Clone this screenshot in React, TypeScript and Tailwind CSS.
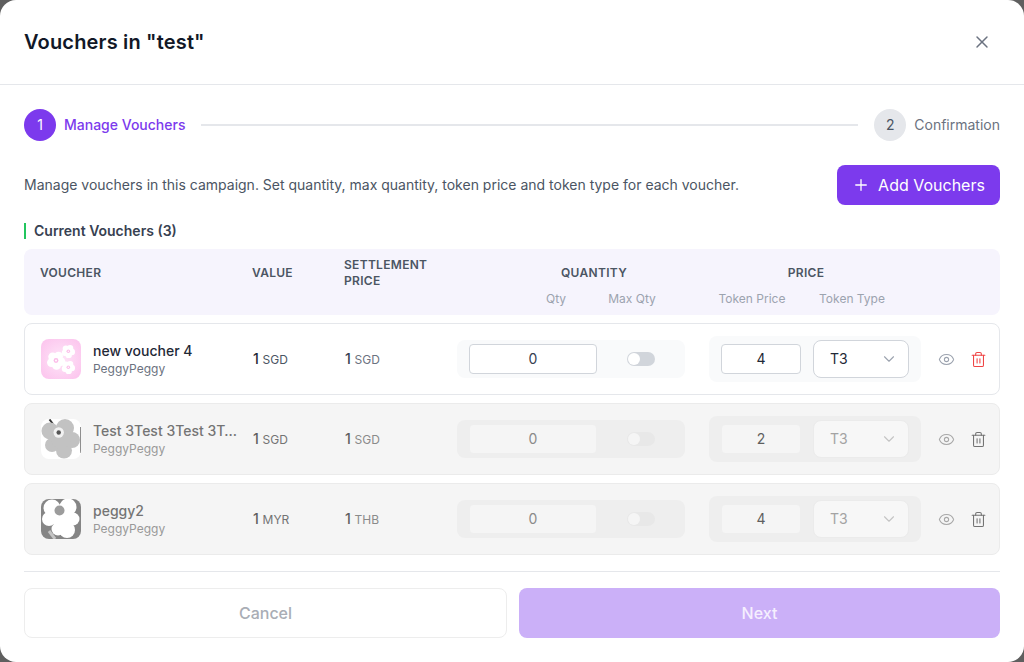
import React from "react";
import { X, Plus, Eye, Trash2, ChevronDown } from "lucide-react";

function PinkFlowers() {
  const flower = (cx: number, cy: number, r: number, p: number) => (
    <g>
      {[0, 72, 144, 216, 288].map((a) => (
        <circle
          key={a}
          cx={cx + r * Math.cos(((a - 60) * Math.PI) / 180)}
          cy={cy + r * Math.sin(((a - 60) * Math.PI) / 180)}
          r={p}
          fill="#fff"
        />
      ))}
      <circle cx={cx} cy={cy} r={p} fill="#fff" />
      <circle cx={cx} cy={cy} r={p * 0.55} fill="#fbbde9" />
      <circle cx={cx} cy={cy} r={p * 0.22} fill="#fff" />
    </g>
  );
  return (
    <svg viewBox="0 0 40 40" className="w-10 h-10 shrink-0 rounded-lg">
      <defs>
        <radialGradient id="pinkbg" cx="50%" cy="50%" r="62%">
          <stop offset="0%" stopColor="#fee6f8" />
          <stop offset="100%" stopColor="#fcc6ee" />
        </radialGradient>
      </defs>
      <rect width="40" height="40" fill="url(#pinkbg)" />
      {flower(15, 21.5, 5, 4.4)}
      {flower(27.3, 12.3, 3.6, 3.2)}
      {flower(27.3, 28.3, 3.6, 3.2)}
    </svg>
  );
}

function GrayFlower() {
  return (
    <svg viewBox="0 0 40 40" className="w-10 h-10 shrink-0 rounded-lg">
      <rect width="40" height="40" fill="#ffffff" />
      <path d="M39.5 8v26" stroke="#8f8f8f" strokeWidth="1" />
      <path d="M8.5 0.5l3.5 4.5" stroke="#333333" strokeWidth="2" />
      <g fill="#c2c2c2">
        <circle cx="9" cy="12" r="8.5" />
        <circle cx="24" cy="9" r="9" />
        <circle cx="31" cy="21" r="8" />
        <circle cx="23" cy="31.5" r="8" />
        <circle cx="11" cy="26" r="7" />
        <circle cx="20" cy="20" r="10" />
      </g>
      <circle cx="17.7" cy="13.5" r="5.2" fill="#f2f2f2" />
      <circle cx="17.7" cy="13.5" r="2.2" fill="#555555" />
    </svg>
  );
}

function DarkFlower() {
  return (
    <svg viewBox="0 0 40 40" className="w-10 h-10 shrink-0 rounded-lg">
      <rect width="40" height="40" fill="#858585" />
      <path d="M8 32l6 8" stroke="#c4c4c4" strokeWidth="3" />
      <g fill="#ffffff">
        <circle cx="11" cy="9" r="8.5" />
        <circle cx="27" cy="8" r="8.5" />
        <circle cx="32" cy="20" r="6.5" />
        <circle cx="26" cy="31" r="8" />
        <circle cx="8" cy="20" r="7" />
        <circle cx="17" cy="30" r="6.5" />
        <circle cx="20" cy="18" r="10" />
      </g>
      <circle cx="18.5" cy="11.5" r="5" fill="#9c9c9c" />
    </svg>
  );
}

type Row = {
  img: React.ReactNode;
  name: string;
  value: string;
  settle: string;
  price: string;
  active?: boolean;
};

const rows: Row[] = [
  { img: <PinkFlowers />, name: "new voucher 4", value: "SGD", settle: "SGD", price: "4", active: true },
  { img: <GrayFlower />, name: "Test 3Test 3Test 3Test 3", value: "SGD", settle: "SGD", price: "2" },
  { img: <DarkFlower />, name: "peggy2", value: "MYR", settle: "THB", price: "4" },
];

function VoucherRow({ r }: { r: Row }) {
  const a = r.active;
  return (
    <div
      className={
        "flex items-center h-[72px] pl-4 rounded-lg border " +
        (a ? "bg-white border-[#e5e7eb]" : "bg-[#f5f5f5] border-[#ebebeb]")
      }
    >
      <div className="flex items-center gap-3 w-[212px] pr-3 min-w-0">
        {r.img}
        <div className="min-w-0 flex-1">
          <div className={"text-sm leading-5 truncate font-medium " + (a ? "text-[#1f2937]" : "text-[#747474]")}>
            {r.name}
          </div>
          <div className={"text-xs leading-4 truncate " + (a ? "text-[#6b7280]" : "text-[#999999]")}>PeggyPeggy</div>
        </div>
      </div>
      <div className={"w-[92px] text-sm font-medium " + (a ? "text-[#1f2937]" : "text-[#5f5f5f]")}>
        1 <span className={"text-xs font-normal " + (a ? "text-[#4b5563]" : "text-[#737373]")}>{r.value}</span>
      </div>
      <div className={"w-[112px] text-sm font-medium " + (a ? "text-[#374151]" : "text-[#5f5f5f]")}>
        1 <span className={"text-xs font-normal " + (a ? "text-[#6b7280]" : "text-[#8a8a8a]")}>{r.settle}</span>
      </div>
      <div
        className={
          "flex items-center w-[228px] h-[38px] px-3 rounded-lg " + (a ? "bg-[#f9fafb]" : "bg-[#eeeeee]")
        }
      >
        <div
          className={
            "w-32 h-[30px] flex items-center justify-center text-sm rounded border " +
            (a ? "bg-white border-[#d1d5db] text-[#374151]" : "bg-[#f5f5f5] border-[#eeeeee] text-[#8a8a8a]")
          }
        >
          0
        </div>
        <div
          className={
            "ml-[30px] w-7 h-3.5 rounded-full flex items-center pl-px " + (a ? "bg-[#d1d5db]" : "bg-[#e8e8e8]")
          }
        >
          <div className={"w-3 h-3 rounded-full " + (a ? "bg-white" : "bg-[#f5f5f5]")} />
        </div>
      </div>
      <div
        className={
          "ml-6 flex items-center gap-3 w-[212px] h-[46px] px-3 rounded-lg " + (a ? "bg-[#f9fafb]" : "bg-[#eeeeee]")
        }
      >
        <div
          className={
            "w-20 h-[30px] flex items-center justify-center text-sm rounded border " +
            (a ? "bg-white border-[#d1d5db] text-[#1f2937]" : "bg-[#f5f5f5] border-[#eeeeee] text-[#5f5f5f]")
          }
        >
          {r.price}
        </div>
        <div
          className={
            "w-24 h-[38px] flex items-center justify-between pl-4 pr-2.5 text-sm rounded-lg border " +
            (a ? "bg-white border-[#d1d5db] text-[#1f2937]" : "bg-[#f7f7f7] border-[#ebebeb] text-[#a3a3a3]")
          }
        >
          T3
          <ChevronDown size={18} strokeWidth={1.5} className={a ? "text-[#9ca3af]" : "text-[#c4c4c4]"} />
        </div>
      </div>
      <div className="ml-[17px] flex items-center gap-[15px]">
        <Eye size={17} strokeWidth={1.5} className={a ? "text-[#9ca3af]" : "text-[#a8a8a8]"} />
        <Trash2 size={17} strokeWidth={1.5} className={a ? "text-[#ef4444]" : "text-[#737373]"} />
      </div>
    </div>
  );
}

export default function App() {
  return (
    <div className="w-[1024px] h-[662px] bg-[#5f5f5f] overflow-hidden font-['Inter',sans-serif] [font-optical-sizing:none]">
      <div className="w-full h-full bg-white rounded-2xl flex flex-col">
        <div className="h-[85px] shrink-0 border-b border-[#e5e7eb] flex items-center justify-between px-6">
          <h1 className="text-xl font-semibold text-[#111827] tracking-[0.17px]">Vouchers in "test"</h1>
          <button className="w-9 h-9 flex items-center justify-center text-[#6b7280]">
            <X size={20} strokeWidth={1.75} />
          </button>
        </div>

        <div className="flex-1 px-6 pt-6 flex flex-col">
          <div className="flex items-center h-8">
            <div className="w-8 h-8 rounded-full bg-[#7c3aed] text-white text-sm flex items-center justify-center">1</div>
            <span className="ml-2 text-sm font-medium text-[#7c3aed]">Manage Vouchers</span>
            <div className="flex-1 h-0.5 mx-4 bg-[#e5e7eb]" />
            <div className="w-8 h-8 rounded-full bg-[#e5e7eb] text-[#4b5563] text-sm flex items-center justify-center">2</div>
            <span className="ml-2 text-sm text-[#6b7280]">Confirmation</span>
          </div>

          <div className="mt-6 flex items-center justify-between h-10">
            <p className="text-sm text-[#4b5563]">
              Manage vouchers in this campaign. Set quantity, max quantity, token price and token type for each voucher.
            </p>
            <button className="h-10 w-[163px] rounded-lg bg-[#7c3aed] text-white flex items-center justify-center gap-2 text-base font-normal">
              <Plus size={18} strokeWidth={1.75} />
              Add Vouchers
            </button>
          </div>

          <div className="mt-[18px] h-4 flex items-center border-l-2 border-[#22c55e] pl-2 text-sm font-semibold text-[#374151]">
            Current Vouchers (3)
          </div>

          <div className="mt-2.5 h-[66px] rounded-lg bg-[#f6f4fd] px-4 pt-2">
            <div className="flex items-center h-8 text-xs font-semibold text-[#4b5563] tracking-wide uppercase">
              <div className="w-[212px]">Voucher</div>
              <div className="w-[92px]">Value</div>
              <div className="w-[113px] leading-4">Settlement Price</div>
              <div className="w-[274px] text-center">Quantity</div>
              <div className="w-[150px] text-center">Price</div>
            </div>
            <div className="mt-0.5 flex pl-[478px] text-xs leading-4 text-[#9ca3af]">
              <div className="w-[76px] text-center">Qty</div>
              <div className="w-[76px] text-center">Max Qty</div>
              <div className="w-[100px] ml-8 text-center">Token Price</div>
              <div className="w-[100px] text-center">Token Type</div>
            </div>
          </div>

          <div className="mt-2 flex flex-col gap-2">
            {rows.map((r) => (
              <VoucherRow key={r.name} r={r} />
            ))}
          </div>

          <div className="mt-4 border-t border-[#e5e7eb] pt-4 flex gap-3">
            <button className="h-[50px] w-[483px] rounded-lg border border-[#ededed] bg-white text-base font-medium text-[#a9adb5]">
              Cancel
            </button>
            <button className="h-[50px] flex-1 rounded-lg bg-[#cbb0f8] text-base font-medium text-[#f5effe]">Next</button>
          </div>
        </div>
      </div>
    </div>
  );
}
